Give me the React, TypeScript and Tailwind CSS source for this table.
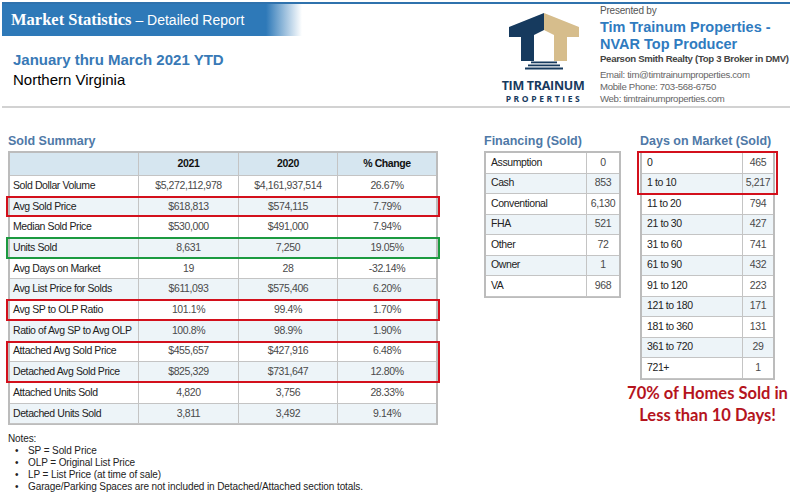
import React from 'react'

const sold = [
    ["Sold Dollar Volume", "$5,272,112,978", "$4,161,937,514", "26.67%"],
    ["Avg Sold Price", "$618,813", "$574,115", "7.79%"],
    ["Median Sold Price", "$530,000", "$491,000", "7.94%"],
    ["Units Sold", "8,631", "7,250", "19.05%"],
    ["Avg Days on Market", "19", "28", "-32.14%"],
    ["Avg List Price for Solds", "$611,093", "$575,406", "6.20%"],
    ["Avg SP to OLP Ratio", "101.1%", "99.4%", "1.70%"],
    ["Ratio of Avg SP to Avg OLP", "100.8%", "98.9%", "1.90%"],
    ["Attached Avg Sold Price", "$455,657", "$427,916", "6.48%"],
    ["Detached Avg Sold Price", "$825,329", "$731,647", "12.80%"],
    ["Attached Units Sold", "4,820", "3,756", "28.33%"],
    ["Detached Units Sold", "3,811", "3,492", "9.14%"],
]

// which rows get a highlight box
const soldGroups: { rows: number[]; box?: 'red' | 'green' }[] = [
    { rows: [0] },
    { rows: [1], box: 'red' },
    { rows: [2] },
    { rows: [3], box: 'green' },
    { rows: [4] },
    { rows: [5] },
    { rows: [6], box: 'red' },
    { rows: [7] },
    { rows: [8, 9], box: 'red' },
    { rows: [10] },
    { rows: [11] },
]

const financing = [
    ["Assumption", "0"],
    ["Cash", "853"],
    ["Conventional", "6,130"],
    ["FHA", "521"],
    ["Other", "72"],
    ["Owner", "1"],
    ["VA", "968"],
]

const days = [
    ["0", "465"],
    ["1 to 10", "5,217"],
    ["11 to 20", "794"],
    ["21 to 30", "427"],
    ["31 to 60", "741"],
    ["61 to 90", "432"],
    ["91 to 120", "223"],
    ["121 to 180", "171"],
    ["181 to 360", "131"],
    ["361 to 720", "29"],
    ["721+", "1"],
]

const notes = [
    "SP = Sold Price",
    "OLP = Original List Price",
    "LP = List Price (at time of sale)",
    "Garage/Parking Spaces are not included in Detached/Attached section totals.",
]

const Logo = () => (
    <div className="flex flex-col items-center w-[82px] pt-[4px]">
        <svg width="80" height="62" viewBox="0 0 80 62">
            <polygon points="6,19 41,5 41,22 31,27 31,53 18,53 18,29 6,29" fill="#163a5e" />
            <polygon points="41,5 76,19 76,29 64,29 64,53 51,53 51,27 41,22" fill="#d6bd8c" />
            <rect x="28" y="53.5" width="26" height="1.8" fill="#163a5e" />
            <rect x="25" y="56.5" width="32" height="1.8" fill="#163a5e" />
            <rect x="22" y="59.5" width="38" height="2" fill="#163a5e" />
        </svg>
        <div className="mt-[9px] font-['Open_Sans',sans-serif] font-bold text-[12.5px] leading-[13px] text-[#173a5e] tracking-[-0.3px] whitespace-nowrap">
            TIM TRAINUM
        </div>
        <div className="mt-[1px] font-['Open_Sans',sans-serif] font-bold text-[8.5px] leading-[11px] text-[#173a5e] tracking-[2.6px] pl-[2px] whitespace-nowrap">
            PROPERTIES
        </div>
    </div>
)

const Box = ({ color }: { color: 'red' | 'green' }) => (
    <span
        className={
            color === 'red'
                ? "absolute -left-[4px] -right-[4px] -top-[1px] bottom-0 border-2 border-[#d3101c] pointer-events-none"
                : "absolute -left-[4px] -right-[4px] -top-[1px] bottom-0 border-2 border-[#1c9a40] pointer-events-none"
        }
    />
)

const SoldRow = ({ row, index }: { row: string[]; index: number }) => (
    <div className={"grid grid-cols-[129px_100px_99px_98px] h-[20.7px] " + (index % 2 === 1 ? "bg-[#edf4f8]" : "bg-white")}>
        {row.map((cell, i) => (
            <div
                key={i}
                className={
                    "flex items-center border-b border-[#c4c4c4] whitespace-nowrap " +
                    (i < 3 ? "border-r " : "") +
                    (i === 0 ? "pl-[3px] text-[#222]" : "justify-center text-[#4a4a4a]")
                }
            >
                {cell}
            </div>
        ))}
    </div>
)

const SmallTable = ({ rows, labelW, boxTop }: { rows: string[][]; labelW: string; boxTop?: boolean }) => {
    const renderRow = (r: string[], i: number) => (
        <div key={i} className={"flex h-[20.5px] " + (i % 2 === 1 ? "bg-[#edf4f8]" : "bg-white")}>
            <div className={labelW + " flex items-center pl-[5px] border-r border-b border-[#c4c4c4] text-[#222]"}>{r[0]}</div>
            <div className="flex-1 flex items-center justify-center border-b border-[#c4c4c4] text-[#4a4a4a]">{r[1]}</div>
        </div>
    )
    return (
        <div className="border-2 border-[#bcbcbc] border-b-[1px] text-[10.5px] tracking-[-0.4px]">
            {boxTop ? (
                <>
                    <div className="relative">
                        {rows.slice(0, 2).map((r, i) => renderRow(r, i))}
                        <span className="absolute -left-[5px] -right-[5px] -top-[2px] -bottom-[1px] border-2 border-[#d3101c] pointer-events-none" />
                    </div>
                    {rows.slice(2).map((r, i) => renderRow(r, i + 2))}
                </>
            ) : (
                rows.map((r, i) => renderRow(r, i))
            )}
        </div>
    )
}

export default function App() {
    return (
        <div className="w-[796px] h-[496px] bg-white overflow-hidden font-['Liberation_Sans',Arial,sans-serif]">
            {/* header */}
            <div className="ml-[2px] mt-[2px] w-[788px] h-[106px] border-t-2 border-[#2f72ad] border-b-2 border-b-[#d2d2d2] flex">
                <div className="flex-1">
                    <div className="w-[300px] h-[32px] flex items-center pl-[9px] bg-[linear-gradient(to_right,#2e79b8_0%,#2e79b8_88%,#ffffff_100%)] whitespace-nowrap">
                        <span className="font-['Liberation_Serif',serif] font-bold text-[16.5px] text-white">Market Statistics</span>
                        <span className="text-[14px] text-white">&nbsp;– Detailed Report</span>
                    </div>
                    <div className="mt-[14px] pl-[11px] text-[15px] leading-[20px] font-bold text-[#3879b6]">January thru March 2021 YTD</div>
                    <div className="pl-[11px] text-[15px] leading-[20px] text-black">Northern Virginia</div>
                </div>
                <Logo />
                <div className="w-[190px] ml-[16px] pt-[1px] whitespace-nowrap">
                    <div className="text-[10px] leading-[12px] tracking-[-0.2px] text-[#555]">Presented by</div>
                    <div className="mt-[2px] text-[14.5px] leading-[17px] font-bold text-[#2f7bbf]">
                        Tim Trainum Properties -<br />NVAR Top Producer
                    </div>
                    <div className="text-[9.6px] leading-[11px] tracking-[-0.3px] font-bold text-[#444]">Pearson Smith Realty (Top 3 Broker in DMV)</div>
                    <div className="mt-[5px] text-[9.6px] leading-[12px] tracking-[-0.3px] text-[#666]">
                        <div>Email: tim@timtrainumproperties.com</div>
                        <div>Mobile Phone: 703-568-6750</div>
                        <div>Web: timtrainumproperties.com</div>
                    </div>
                </div>
            </div>

            {/* body */}
            <div className="flex">
                <div className="ml-[8px] w-[430px]">
                    <div className="mt-[25px] mb-[2px] text-[12.5px] leading-[16px] font-bold text-[#4f79a7]">Sold Summary</div>
                    <div className="border-2 border-[#bcbcbc] border-b-[1px] text-[10.5px] tracking-[-0.4px]">
                        <div className="grid grid-cols-[129px_100px_99px_98px] h-[23px] bg-[#d6e6f0] font-bold text-[#111]">
                            <div className="border-r border-b border-[#c4c4c4]" />
                            <div className="flex items-center justify-center border-r border-b border-[#c4c4c4]">2021</div>
                            <div className="flex items-center justify-center border-r border-b border-[#c4c4c4]">2020</div>
                            <div className="flex items-center justify-center border-b border-[#c4c4c4]">% Change</div>
                        </div>
                        {soldGroups.map((g, gi) => (
                            <div key={gi} className="relative">
                                {g.rows.map((ri) => (
                                    <SoldRow key={ri} row={sold[ri]} index={ri} />
                                ))}
                                {g.box && <Box color={g.box} />}
                            </div>
                        ))}
                    </div>
                    <div className="mt-[8px] text-[10px] leading-[12px] tracking-[-0.1px] text-[#222]">
                        <div>Notes:</div>
                        {notes.map((n, i) => (
                            <div key={i} className="flex">
                                <span className="w-[20px] pl-[7px]">•</span>
                                <span>{n}</span>
                            </div>
                        ))}
                    </div>
                </div>

                <div className="ml-[46px] w-[137px]">
                    <div className="mt-[25px] mb-[2px] text-[12.5px] leading-[16px] font-bold text-[#4f79a7] whitespace-nowrap">Financing (Sold)</div>
                    <SmallTable rows={financing} labelW="w-[101px]" />
                </div>

                <div className="ml-[19px] w-[135px]">
                    <div className="mt-[25px] mb-[2px] text-[12.5px] leading-[16px] font-bold text-[#4f79a7] whitespace-nowrap">Days on Market (Sold)</div>
                    <SmallTable rows={days} labelW="w-[101px]" boxTop />
                    <div className="mt-[2px] -mx-[20px] text-center font-['Lato',sans-serif] font-bold text-[16.5px] leading-[22px] text-[#b5141d]">
                        70% of Homes Sold in<br />Less than 10 Days!
                    </div>
                </div>
            </div>
        </div>
    )
}
